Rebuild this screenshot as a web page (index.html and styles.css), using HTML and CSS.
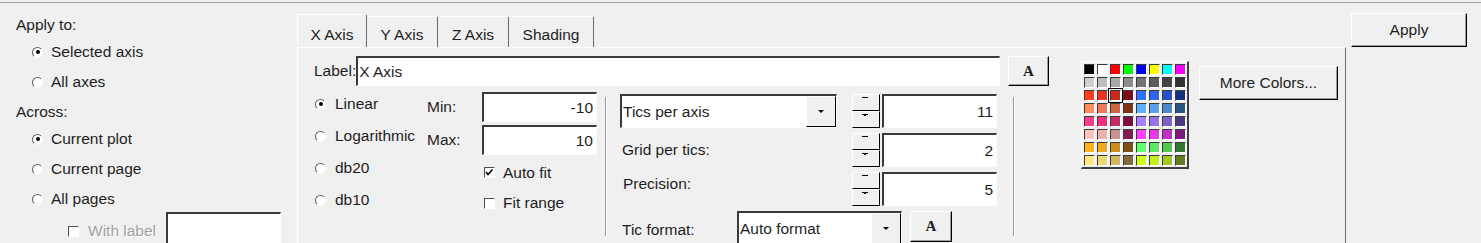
FILE: index.html
```html
<!DOCTYPE html>
<html lang="en">
<head>
    <meta charset="UTF-8">
    <title>Axis Properties</title>
    <link rel="stylesheet" href="styles.css">
</head>
<body>
    <div class="dialog">
        <div class="scope">
            <div class="group-title">Apply to:</div>
            <div class="radio-row"><span class="radio on"></span>Selected axis</div>
            <div class="radio-row"><span class="radio"></span>All axes</div>
            <div class="group-title across">Across:</div>
            <div class="radio-row"><span class="radio on"></span>Current plot</div>
            <div class="radio-row"><span class="radio"></span>Current page</div>
            <div class="radio-row"><span class="radio"></span>All pages</div>
            <div class="with-label">
                <span class="check"></span>
                <span class="disabled">With label</span>
                <span class="field label-field"></span>
            </div>
        </div>

        <div class="tabs-area">
            <div class="tab-strip">
                <div class="tab active">X Axis</div>
                <div class="tab">Y Axis</div>
                <div class="tab">Z Axis</div>
                <div class="tab wide">Shading</div>
            </div>
            <div class="tab-panel">
                <div class="main-col">
                    <div class="label-row">
                        <span>Label:</span>
                        <span class="field text-left">X Axis</span>
                        <button class="btn font-btn">A</button>
                    </div>
                    <div class="lower">
                        <div class="scale-col">
                            <div class="radio-row"><span class="radio on"></span>Linear</div>
                            <div class="radio-row"><span class="radio"></span>Logarithmic</div>
                            <div class="radio-row"><span class="radio"></span>db20</div>
                            <div class="radio-row"><span class="radio"></span>db10</div>
                        </div>
                        <div class="range-col">
                            <div class="range-row"><span class="range-label">Min:</span><span class="field">-10</span></div>
                            <div class="range-row second"><span class="range-label">Max:</span><span class="field">10</span></div>
                            <div class="check-row first">
                                <span class="check"><svg width="9" height="9" viewBox="0 0 9 9"><path d="M1 4 L3 6.5 L7.5 1.5" fill="none" stroke="#000" stroke-width="1.6"/></svg></span>
                                Auto fit
                            </div>
                            <div class="check-row"><span class="check"></span>Fit range</div>
                        </div>
                        <div class="vsep"></div>
                        <div class="tics-col">
                            <div class="tic-row">
                                <div class="lead">
                                    <div class="combo wide">
                                        <span class="combo-text">Tics per axis</span>
                                        <span class="combo-btn"><span class="arrow"></span></span>
                                    </div>
                                </div>
                                <div class="spinner"><span class="spin up"></span><span class="spin down"></span></div>
                                <span class="field">11</span>
                            </div>
                            <div class="tic-row">
                                <div class="lead">Grid per tics:</div>
                                <div class="spinner"><span class="spin up"></span><span class="spin down"></span></div>
                                <span class="field">2</span>
                            </div>
                            <div class="tic-row">
                                <div class="lead raised">Precision:</div>
                                <div class="spinner"><span class="spin up"></span><span class="spin down"></span></div>
                                <span class="field">5</span>
                            </div>
                            <div class="tic-row last">
                                <div class="format-label">Tic format:</div>
                                <div class="combo format">
                                    <span class="combo-text">Auto format</span>
                                    <span class="combo-btn"><span class="arrow"></span></span>
                                </div>
                                <button class="btn font-btn small">A</button>
                            </div>
                        </div>
                        <div class="vsep second"></div>
                    </div>
                </div>

                <div class="color-col">
                    <div class="palette">
                        <span class="swatch" style="background:#000000"></span>
                        <span class="swatch" style="background:#ffffff"></span>
                        <span class="swatch" style="background:#ff0000"></span>
                        <span class="swatch" style="background:#00ff00"></span>
                        <span class="swatch" style="background:#0000ff"></span>
                        <span class="swatch" style="background:#ffff00"></span>
                        <span class="swatch" style="background:#00ffff"></span>
                        <span class="swatch" style="background:#ff00ff"></span>

                        <span class="swatch" style="background:#d0d0d0"></span>
                        <span class="swatch" style="background:#bebebe"></span>
                        <span class="swatch" style="background:#a8a8a8"></span>
                        <span class="swatch" style="background:#8c8c8c"></span>
                        <span class="swatch" style="background:#747474"></span>
                        <span class="swatch" style="background:#5c5c5c"></span>
                        <span class="swatch" style="background:#444444"></span>
                        <span class="swatch" style="background:#303030"></span>

                        <span class="swatch" style="background:#ff3c1e"></span>
                        <span class="swatch" style="background:#ee3220"></span>
                        <span class="swatch selected" style="background:#c8281e"></span>
                        <span class="swatch" style="background:#7f0a1e"></span>
                        <span class="swatch" style="background:#3070ff"></span>
                        <span class="swatch" style="background:#2e64ee"></span>
                        <span class="swatch" style="background:#2452c8"></span>
                        <span class="swatch" style="background:#14307c"></span>

                        <span class="swatch" style="background:#ff8c5c"></span>
                        <span class="swatch" style="background:#f07858"></span>
                        <span class="swatch" style="background:#cc6444"></span>
                        <span class="swatch" style="background:#7f3214"></span>
                        <span class="swatch" style="background:#5cb0ff"></span>
                        <span class="swatch" style="background:#58a0ee"></span>
                        <span class="swatch" style="background:#4c8acc"></span>
                        <span class="swatch" style="background:#2a5580"></span>

                        <span class="swatch" style="background:#ff3c8c"></span>
                        <span class="swatch" style="background:#ee3280"></span>
                        <span class="swatch" style="background:#c82864"></span>
                        <span class="swatch" style="background:#7f0a3c"></span>
                        <span class="swatch" style="background:#a880ff"></span>
                        <span class="swatch" style="background:#9870ee"></span>
                        <span class="swatch" style="background:#8060cc"></span>
                        <span class="swatch" style="background:#4c3880"></span>

                        <span class="swatch" style="background:#ffc0c0"></span>
                        <span class="swatch" style="background:#eeb0a8"></span>
                        <span class="swatch" style="background:#cc9490"></span>
                        <span class="swatch" style="background:#7f1e50"></span>
                        <span class="swatch" style="background:#ff40ff"></span>
                        <span class="swatch" style="background:#e838e8"></span>
                        <span class="swatch" style="background:#c030c8"></span>
                        <span class="swatch" style="background:#801a7f"></span>

                        <span class="swatch" style="background:#ffb01e"></span>
                        <span class="swatch" style="background:#f0a81e"></span>
                        <span class="swatch" style="background:#cc8c1e"></span>
                        <span class="swatch" style="background:#7f5014"></span>
                        <span class="swatch" style="background:#60ff6c"></span>
                        <span class="swatch" style="background:#5ce864"></span>
                        <span class="swatch" style="background:#50c850"></span>
                        <span class="swatch" style="background:#307830"></span>

                        <span class="swatch" style="background:#ffe880"></span>
                        <span class="swatch" style="background:#f0d870"></span>
                        <span class="swatch" style="background:#d0b860"></span>
                        <span class="swatch" style="background:#806c3c"></span>
                        <span class="swatch" style="background:#d0ff1e"></span>
                        <span class="swatch" style="background:#c0f01e"></span>
                        <span class="swatch" style="background:#a0c81e"></span>
                        <span class="swatch" style="background:#607c1e"></span>
                    </div>
                </div>
                <button class="btn more-btn">More Colors...</button>
            </div>
        </div>

        <div class="actions">
            <button class="btn apply-btn">Apply</button>
        </div>
    </div>
</body>
</html>
```

FILE: styles.css
```css
* {
    box-sizing: border-box;
}
body {
    margin: 0;
    background-color: #f0f0f0;
    font-family: "Liberation Sans", Arial, sans-serif;
    font-size: 15.5px;
    color: #1e1e1e;
    overflow: hidden;
}
.dialog {
    display: flex;
    margin-top: 2px;
    border-top: 1px solid #a0a0a0;
    height: 241px;
}

/* left column */
.scope {
    width: 297px;
    flex-shrink: 0;
    padding-top: 9px;
}
.group-title {
    height: 25px;
    line-height: 25px;
    padding-left: 16px;
}
.group-title.across {
    height: 24px;
    line-height: 24px;
    margin-top: 3px;
}
.radio-row {
    display: flex;
    align-items: center;
    height: 30px;
    padding-left: 32px;
    white-space: nowrap;
}
.radio {
    width: 11px;
    height: 11px;
    margin-right: 8px;
    border-radius: 50%;
    background-color: white;
    border: 1px solid;
    border-color: #606060 #f8f8f8 #f8f8f8 #606060;
    display: flex;
    align-items: center;
    justify-content: center;
    flex-shrink: 0;
}
.radio.on::after {
    content: "";
    width: 4px;
    height: 4px;
    border-radius: 50%;
    background-color: #000;
}
.with-label {
    display: flex;
    align-items: center;
    height: 38px;
    margin-top: -2px;
    padding-left: 68px;
}
.with-label .check {
    margin-right: 9px;
}
.disabled {
    color: #a0a0a0;
    text-shadow: 1px 1px 0 #fff;
    width: 78px;
}
.label-field {
    width: 115px;
    height: 38px;
}

/* shared controls */
.field {
    display: block;
    background-color: white;
    border-top: 2px solid #3a3a3a;
    border-left: 2px solid #3a3a3a;
    border-right: 1px solid #fcfcfc;
    border-bottom: 1px solid #fcfcfc;
    text-align: right;
    padding: 0 3px;
    white-space: nowrap;
}
.field.text-left {
    text-align: left;
    padding-left: 1px;
}
.check {
    width: 11px;
    height: 11px;
    background-color: white;
    border-top: 1px solid #505050;
    border-left: 1px solid #505050;
    border-right: 1px solid #fff;
    border-bottom: 1px solid #fff;
    display: flex;
    align-items: center;
    justify-content: center;
    flex-shrink: 0;
}
.btn {
    background-color: #f0f0f0;
    border: 1px solid;
    border-color: #fff #000 #000 #fff;
    box-shadow: inset -1px -1px 0 #a0a0a0;
    font-family: inherit;
    font-size: 15.5px;
    color: #1e1e1e;
    padding: 0;
    cursor: pointer;
}
.font-btn {
    width: 41px;
    height: 30px;
    margin-left: 8px;
    font-family: "Liberation Serif", "Times New Roman", serif;
    font-weight: bold;
    font-size: 15px;
    flex-shrink: 0;
}
.font-btn.small {
    width: 42px;
    height: 31px;
    align-self: flex-start;
}
.combo {
    display: flex;
    background-color: white;
    border-top: 2px solid #3a3a3a;
    border-left: 2px solid #3a3a3a;
    border-right: 1px solid #fcfcfc;
    border-bottom: 1px solid #fcfcfc;
}
.combo.wide {
    width: 217px;
    height: 34px;
}
.combo.format {
    width: 165px;
    height: 34px;
    align-self: flex-start;
}
.combo-text {
    flex: 1;
    padding-left: 1px;
    display: flex;
    align-items: center;
    white-space: nowrap;
}
.combo-btn {
    width: 30px;
    background-color: #f0f0f0;
    border-top: 1px solid #fff;
    border-left: 1px solid #fff;
    border-right: 1px solid #000;
    border-bottom: 1px solid #000;
    display: flex;
    align-items: center;
    justify-content: center;
}
.arrow {
    width: 0;
    height: 0;
    border-left: 3px solid transparent;
    border-right: 3px solid transparent;
    border-top: 3px solid #000;
}

/* tabs */
.tabs-area {
    width: 1049px;
    flex-shrink: 0;
    display: flex;
    flex-direction: column;
}
.tab-strip {
    display: flex;
    align-items: flex-end;
    height: 44px;
    flex-shrink: 0;
}
.tab {
    width: 71px;
    height: 31px;
    padding-bottom: 1px;
    line-height: 22px;
    display: flex;
    align-items: flex-end;
    justify-content: center;
    border-top: 1px solid #fff;
    border-right: 1px solid #6a6a6a;
    border-radius: 2px 2px 0 0;
    white-space: nowrap;
}
.tab.active {
    width: 70px;
    height: 33px;
    border-left: 1px solid #fff;
}
.tab.wide {
    width: 85px;
}
.tab-panel {
    flex: 1;
    min-height: 0;
    display: flex;
    border-top: 1px solid #fff;
    border-left: 1px solid #fff;
    border-right: 1px solid #6a6a6a;
    padding: 8px 0 0 16px;
}
.main-col {
    width: 735px;
    flex-shrink: 0;
}
.label-row {
    display: flex;
    align-items: center;
    height: 30px;
}
.label-row .field {
    flex: 1;
    height: 30px;
    line-height: 27px;
}
.lower {
    display: flex;
    margin-top: 2px;
}
.scale-col {
    width: 113px;
}
.scale-col .radio-row {
    height: 32px;
    padding-left: 1px;
}
.scale-col .radio {
    margin-right: 9px;
}
.range-col {
    width: 170px;
    padding-top: 4px;
}
.range-row {
    display: flex;
    align-items: center;
    height: 30px;
}
.range-row.second {
    margin-top: 3px;
}
.range-label {
    width: 55px;
}
.range-row .field {
    width: 115px;
    height: 30px;
    line-height: 27px;
}
.check-row {
    display: flex;
    align-items: center;
    height: 30px;
    padding-left: 57px;
}
.check-row.first {
    margin-top: 2px;
    height: 31px;
}
.check-row .check {
    margin-right: 8px;
}
.vsep {
    width: 2px;
    height: 139px;
    margin: 9px 0 0 8px;
    border-left: 1px solid #9a9a9a;
    border-right: 1px solid #fff;
}
.vsep.second {
    margin-left: 16px;
}
.tics-col {
    width: 377px;
    margin-left: 13px;
    padding-top: 6px;
}
.tic-row {
    display: flex;
    align-items: center;
    height: 34px;
    margin-bottom: 5px;
}
.tic-row .lead {
    width: 232px;
    padding-left: 2px;
}
.tic-row .lead.raised {
    padding-left: 3px;
    padding-bottom: 10px;
}
.tic-row .lead .combo {
    margin-left: -2px;
}
.tic-row .field {
    width: 115px;
    height: 34px;
    line-height: 31px;
    margin-left: 2px;
}
.tic-row.last {
    height: 34px;
    align-items: flex-start;
}
.format-label {
    width: 117px;
    padding: 10px 0 0 2px;
}
.spinner {
    width: 28px;
    height: 34px;
    display: flex;
    flex-direction: column;
}
.spin {
    flex: 1;
    position: relative;
    background-color: #f0f0f0;
    border-top: 1px solid #fff;
    border-left: 1px solid #fff;
    border-right: 1px solid #000;
    border-bottom: 1px solid #000;
}
.spin::before {
    content: "";
    position: absolute;
    left: 9px;
    top: 2px;
    width: 6px;
    height: 1px;
    background-color: #000;
}
.spin.down::after {
    content: "";
    position: absolute;
    left: 11px;
    top: 3px;
    width: 2px;
    height: 1px;
    background-color: #000;
}

/* palette */
.color-col {
    margin-left: 32px;
    padding-top: 5px;
}
.palette {
    display: grid;
    grid-template-columns: repeat(8, 11px);
    grid-auto-rows: 11px;
    gap: 2px;
    padding: 2px 1px 1px 2px;
    border-top: 1px solid #fff;
    border-left: 1px solid #fff;
    border-right: 2px solid #404040;
    border-bottom: 2px solid #404040;
}
.swatch {
    border-top: 1px solid #3c3c3c;
    border-left: 1px solid #3c3c3c;
    border-right: 1px solid #fff;
    border-bottom: 1px solid #fff;
}
.swatch.selected {
    outline: 1px solid #000;
    outline-offset: 1px;
}
.more-btn {
    width: 139px;
    height: 34px;
    margin: 10px 0 0 10px;
}

/* right column */
.actions {
    padding: 10px 0 0 5px;
}
.apply-btn {
    width: 116px;
    height: 34px;
}
```
